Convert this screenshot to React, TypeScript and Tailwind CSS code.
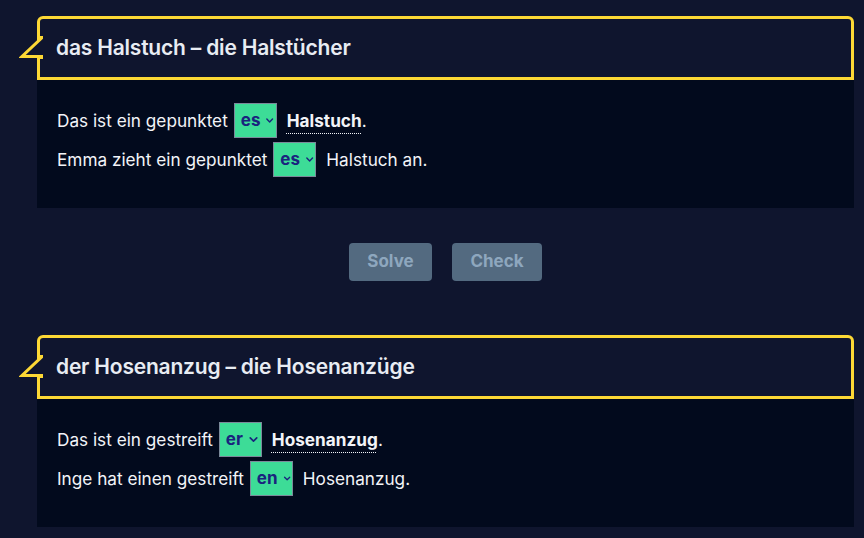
import { ChevronDown } from "lucide-react";

type Part = string | { select: string } | { noun: string };

const SECTIONS: { title: string; lines: Part[][] }[] = [
  {
    title: "das Halstuch – die Halstücher",
    lines: [
      ["Das ist ein gepunktet", { select: "es" }, { noun: "Halstuch" }, "."],
      ["Emma zieht ein gepunktet", { select: "es" }, "Halstuch an."],
    ],
  },
  {
    title: "der Hosenanzug – die Hosenanzüge",
    lines: [
      ["Das ist ein gestreift", { select: "er" }, { noun: "Hosenanzug" }, "."],
      ["Inge hat einen gestreift", { select: "en" }, "Hosenanzug."],
    ],
  },
];

function Heading({ title }: { title: string }) {
  return (
    <div className="relative h-16 rounded-t-md border-[3px] border-[#fdd835] bg-[#0f152e] flex items-center pl-[16px]">
      {/* speech bubble tail */}
      <svg
        className="absolute left-[-21px] top-[15px]"
        width="26"
        height="26"
        viewBox="0 0 26 26"
      >
        <polygon points="22.5,4 3,22.5 25,22.5 25,3" fill="#0f152e" />
        <polyline
          points="22.5,2 22.5,4 3,22.5 22.5,22.5 22.5,25"
          fill="none"
          stroke="#fdd835"
          strokeWidth="3"
        />
      </svg>
      <h2 className="text-[21px] font-semibold text-[#e8ecf3] tracking-[-0.2px]">{title}</h2>
    </div>
  );
}

function Select({ value }: { value: string }) {
  return (
    <span className="inline-flex items-center h-[35px] w-[43px] ml-[6px] mr-[10px] pl-[6px] gap-[4px] bg-[#3ddc97] border border-[#7a8a9a] text-[#1a237e] font-bold text-[17px]">
      {value}
      <ChevronDown size={13} strokeWidth={3} />
    </span>
  );
}

function Sentence({ parts }: { parts: Part[] }) {
  return (
    <div className="flex items-center h-[39px] text-[17.2px] text-[#f2f4f8]">
      {parts.map((p, i) =>
        typeof p === "string" ? (
          <span key={i}>{p}</span>
        ) : "select" in p ? (
          <Select key={i} value={p.select} />
        ) : (
          <span key={i} className="font-bold underline decoration-dotted decoration-1 underline-offset-[6px]">
            {p.noun}
          </span>
        )
      )}
    </div>
  );
}

export default function App() {
  return (
    <div
      className="min-h-screen bg-[#0f152e] pt-4 pl-[37px] pr-[10px]"
      style={{ fontFamily: "Inter, 'Noto Sans', sans-serif" }}
    >
      {SECTIONS.map((s, idx) => (
        <div key={s.title}>
          <Heading title={s.title} />
          <div className="bg-[#020a1d] h-32 pl-[20px] pt-[21px]">
            {s.lines.map((l, i) => (
              <Sentence key={i} parts={l} />
            ))}
          </div>
          {idx === 0 && (
            <div className="flex justify-center gap-5 pt-[35px] pb-[54px]">
              <button className="h-[38px] w-[83px] rounded bg-[#536a80] text-[#8ea7be] font-bold text-[17px]">
                Solve
              </button>
              <button className="h-[38px] w-[90px] rounded bg-[#536a80] text-[#8ea7be] font-bold text-[17px]">
                Check
              </button>
            </div>
          )}
        </div>
      ))}
    </div>
  );
}
